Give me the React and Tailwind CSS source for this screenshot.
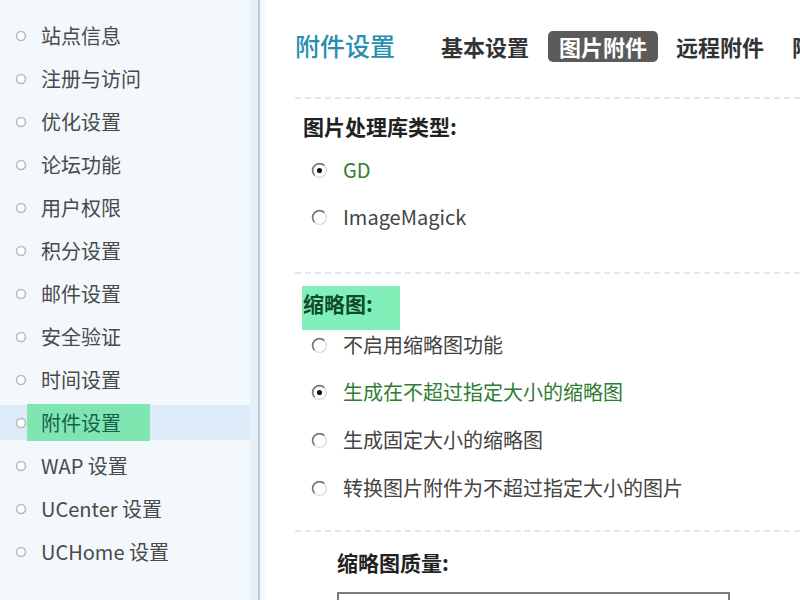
import React from 'react';

const MENU = [
  '站点信息', '注册与访问', '优化设置', '论坛功能', '用户权限', '积分设置',
  '邮件设置', '安全验证', '时间设置', '附件设置', 'WAP 设置', 'UCenter 设置', 'UCHome 设置',
];

const FONT = { fontFamily: '"Noto Sans CJK SC", "Noto Sans", sans-serif' };

function Bullet() {
  return (
    <svg width="12" height="12" viewBox="0 0 12 12" className="shrink-0">
      <circle cx="6" cy="6" r="4.5" fill="#fff" stroke="#b9bcbf" strokeWidth="1.6" />
    </svg>
  );
}

function Radio({ checked }) {
  return (
    <svg width="17" height="17" viewBox="0 0 16 16" className="shrink-0">
      <circle cx="8" cy="8" r="6.5" fill="#fff" stroke="#d8d8d8" strokeWidth="1.2" />
      <path d="M3.4 12.6 A6.5 6.5 0 0 1 12.6 3.4" fill="none" stroke="#7a7a7a" strokeWidth="1.6" />
      {checked && <circle cx="8" cy="8" r="2.4" fill="#111" />}
    </svg>
  );
}

function Option({ label, checked, className = '' }) {
  return (
    <div className={`flex items-center h-[30px] pl-[16px] ${className}`}>
      <Radio checked={checked} />
      <span className={`ml-[15px] text-[20px] ${checked ? 'text-[#2f7d32]' : 'text-[#444]'}`}>{label}</span>
    </div>
  );
}

function Dashed({ className = '' }) {
  return <div className={`h-0 border-t-2 border-dashed border-[#e4e6e8] ${className}`} />;
}

export default function App() {
  return (
    <div className="flex w-[800px] h-[600px] overflow-hidden bg-white" style={FONT}>
      {/* sidebar */}
      <div className="w-[250px] shrink-0 bg-[#f3f8fc] pt-[14px]">
        {MENU.map((m) => {
          const active = m === '附件设置';
          return (
            <div key={m} className="h-[43px] flex items-center">
              {active ? (
                <div className="w-full h-[35px] bg-[#dcebf7] flex items-center pl-[15px]">
                  <Bullet />
                  <span className="h-[37px] flex items-center px-[14px] w-[123px] bg-[#7ee6b0] text-[20px] text-[#1b5e50]">
                    {m}
                  </span>
                </div>
              ) : (
                <div className="flex items-center pl-[15px]">
                  <Bullet />
                  <span className="ml-[14px] text-[20px] text-[#4a4a4a]">{m}</span>
                </div>
              )}
            </div>
          );
        })}
      </div>
      <div className="w-[8px] shrink-0 bg-[#e6f0f8]" />
      <div className="w-[2px] shrink-0 bg-[#bcc8d1]" />

      {/* main */}
      <div className="flex-1 min-w-0 pt-[30px] pl-[29px] border-l-[6px] border-[#f4fbfd]">
        <div className="h-[32px] flex items-center whitespace-nowrap">
          <span className="text-[25px] text-[#2a8fae] font-medium">附件设置</span>
          <span className="ml-[46px] text-[22px] font-bold text-[#333]">基本设置</span>
          <span className="ml-[19px] h-[31px] px-[11px] flex items-center rounded-[5px] bg-[#5b5b5b] text-[22px] font-bold text-white">图片附件</span>
          <span className="ml-[18px] text-[22px] font-bold text-[#333]">远程附件</span>
          <span className="ml-[28px] text-[22px] font-bold text-[#333]">附件类型</span>
        </div>

        <Dashed className="mt-[35px]" />
        <div className="h-[56px] flex items-center pl-[8px] text-[21px] font-bold text-[#222]">图片处理库类型:</div>
        <Option label="GD" checked />
        <Option label="ImageMagick" className="mt-[17px]" />

        <Dashed className="mt-[40px]" />
        <div className="mt-[12px] ml-[7px] w-[98px] h-[44px] bg-[#80f0b8] pt-[5px] pl-[1px] leading-[24px] text-[21px] font-bold text-[#0f4a2a]">缩略图:</div>
        <Option label="不启用缩略图功能" />
        <Option label="生成在不超过指定大小的缩略图" checked className="mt-[17px]" />
        <Option label="生成固定大小的缩略图" className="mt-[18px]" />
        <Option label="转换图片附件为不超过指定大小的图片" className="mt-[18px]" />

        <Dashed className="mt-[27px]" />
        <div className="mt-[16px] h-[30px] flex items-center pl-[42px] text-[21px] font-bold text-[#222]">缩略图质量:</div>
        <div className="mt-[14px] ml-[42px] w-[393px] h-[40px] border-2 border-[#7a7a7a] bg-white" />
      </div>
    </div>
  );
}
